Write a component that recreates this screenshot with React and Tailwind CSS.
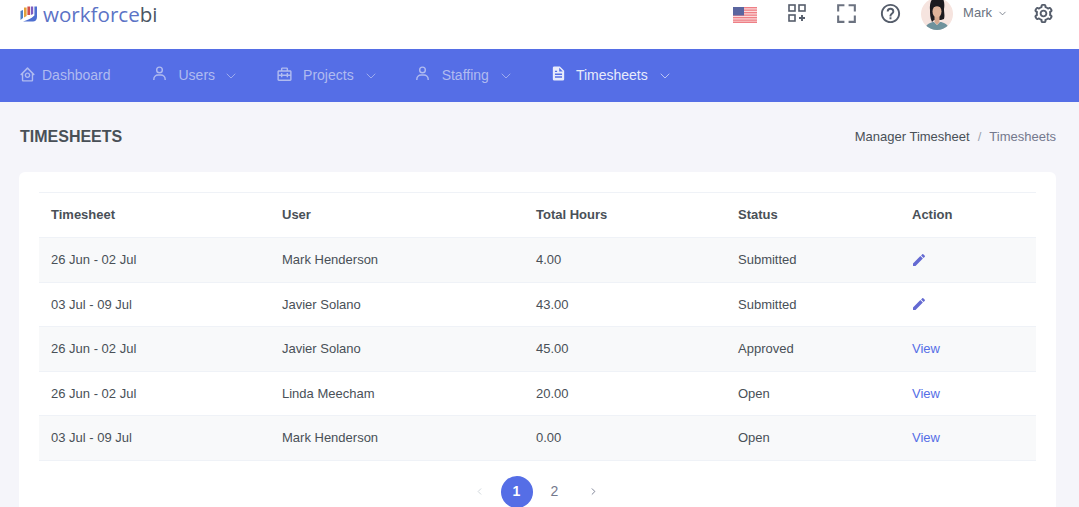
import React from "react";
import { ChevronDown, ChevronLeft, ChevronRight } from "lucide-react";
import { BiHomeCircle, BiUser, BiBriefcaseAlt2, BiSolidFile, BiFullscreen, BiHelpCircle, BiCog } from "react-icons/bi";

const rows = [
  ["26 Jun - 02 Jul", "Mark Henderson", "4.00", "Submitted", "edit"],
  ["03 Jul - 09 Jul", "Javier Solano", "43.00", "Submitted", "edit"],
  ["26 Jun - 02 Jul", "Javier Solano", "45.00", "Approved", "View"],
  ["26 Jun - 02 Jul", "Linda Meecham", "20.00", "Open", "View"],
  ["03 Jul - 09 Jul", "Mark Henderson", "0.00", "Open", "View"],
];

function Logo() {
  return (
    <svg width="18" height="18" viewBox="0 0 18 18">
      <path d="M0.5 6 L3 5 V13 L0.5 15 Z" fill="#4f7fc4" />
      <path d="M4 2.5 H6.6 V11 L4 12.5 Z" fill="#e3a13a" />
      <path d="M7.4 1.5 H10 V10 H7.4 Z" fill="#d4504a" />
      <path d="M10.8 1.5 H13.2 V9 L10.8 10 Z" fill="#7d5cc0" />
      <path d="M14.4 1.5 H17 V12 C17 15 15 16.5 13 16.5 H3 C7 15 11 14 14.4 10.5 Z" fill="#4e6fd0" />
    </svg>
  );
}

function Flag() {
  return (
    <svg width="24" height="16" viewBox="0 0 24 16">
      <rect width="24" height="16" fill="#fbdcdc" />
      {[0, 2.5, 5, 7.5, 10, 12.5].map((y) => (
        <rect key={y} y={y} width="24" height="1.3" fill="#ee7f86" />
      ))}
      <rect y="14.6" width="24" height="1.4" fill="#ee7f86" />
      <rect width="11" height="8.5" fill="#5a659f" />
    </svg>
  );
}

function AddGrid() {
  return (
    <svg width="18" height="18" viewBox="0 0 18 18" fill="none" stroke="#555d6b" strokeWidth="1.6">
      <rect x="1" y="1" width="6" height="6" />
      <rect x="11" y="1" width="6" height="6" />
      <rect x="1" y="11" width="6" height="6" />
      <path d="M14 11 V17 M11 14 H17" strokeWidth="1.9" />
    </svg>
  );
}

function Avatar() {
  return (
    <svg width="32" height="32" viewBox="0 0 32 32" className="rounded-full">
      <rect width="32" height="32" fill="#f6e4df" />
      <path d="M9 12 C8 2 13 -2 17 -2 C23 -2 24 5 23 11 C23 15 24 17 23 21 L20 22 H13 L11 24 C9 20 9 16 9 12 Z" fill="#1c1a1f" />
      <path d="M3 32 C5 26 10 24 13 24 L16 27 L19 24 C22 24 27 26 29 32 Z" fill="#6f929c" />
      <path d="M13.5 18 H18.5 V24 L16 27 L13.5 24 Z" fill="#d7a98f" />
      <ellipse cx="16" cy="13.5" rx="4.5" ry="6" fill="#dfb39a" />
      <path d="M11 11 C13 8 18 7 21 11 L21 6 H11 Z" fill="#1c1a1f" />
    </svg>
  );
}

function Pen() {
  return (
    <svg width="16" height="16" viewBox="0 0 24 24" fill="#646ad2" className="-ml-[1px]">
      <path d="M20.71,7.04C21.1,6.65 21.1,6 20.71,5.63L18.37,3.29C18,2.9 17.35,2.9 16.96,3.29L15.12,5.12L18.87,8.87M3,17.25V21H6.75L17.81,9.93L14.06,6.18L3,17.25Z" />
    </svg>
  );
}

function Chev({ className }) {
  return <ChevronDown size={16} strokeWidth={1.2} className={className} />;
}

export default function App() {
  return (
    <div className="h-[507px] w-[1079px] overflow-hidden bg-[#f5f5fa] font-['Liberation_Sans',sans-serif] text-[#495057]">
      <header className="flex h-[49px] items-start bg-white pl-[20px] pr-[24px]">
        <div className="mt-[4px] flex items-center">
          <Logo />
          <span className="ml-[5px] font-['Open_Sans',sans-serif] text-[20.6px] font-medium leading-[20px] text-[#5c73c6]">
            workforce<span className="font-normal text-[#4b5563]">bi</span>
          </span>
        </div>
        <div className="ml-auto flex h-[26px] items-center">
          <div className="mt-[4px]"><Flag /></div>
          <div className="ml-[31px]"><AddGrid /></div>
          <BiFullscreen size={25} className="ml-[28px] text-[#6b7280]" />
          <BiHelpCircle size={23} className="ml-[20px] text-[#555d6b]" />
          <div className="ml-[19px] mt-[1px]"><Avatar /></div>
          <span className="ml-[10px] text-[13px] text-[#6b7280]">Mark</span>
          <ChevronDown size={11} strokeWidth={1.8} className="ml-[5px] text-[#6b7280]" />
          <BiCog size={23} className="ml-[24px] text-[#555d6b]" />
        </div>
      </header>

      <nav className="flex h-[53px] items-center bg-[#556ee6] pl-[19px] text-[14px] text-[#b0bbf0]">
        <BiHomeCircle size={17} className="-mt-[3px]" />
        <span className="ml-[6px]">Dashboard</span>

        <BiUser size={17} className="ml-[40px] -mt-[4px]" />
        <span className="ml-[11px]">Users</span>
        <Chev className="ml-[8px]" />

        <BiBriefcaseAlt2 size={17} className="ml-[37px] -mt-[3px]" />
        <span className="ml-[10px]">Projects</span>
        <Chev className="ml-[9px]" />

        <BiUser size={17} className="ml-[35px] -mt-[4px]" />
        <span className="ml-[11px]">Staffing</span>
        <Chev className="ml-[9px]" />

        <BiSolidFile size={17} className="ml-[36px] -mt-[4px] text-[#e8ebfb]" />
        <span className="ml-[9px] text-[#e8ebfb]">Timesheets</span>
        <Chev className="ml-[9px] text-[#d5daf8]" />
      </nav>

      <div className="flex h-[70px] items-center justify-between pl-[20px] pr-[23px]">
        <h1 className="text-[16px] font-bold text-[#495057]">TIMESHEETS</h1>
        <div className="text-[13px]">
          <span className="text-[#495057]">Manager Timesheet</span>
          <span className="mx-[8px] text-[#9ca3af]">/</span>
          <span className="text-[#74788d]">Timesheets</span>
        </div>
      </div>

      <main className="ml-[19px] w-[1037px] rounded-[6px] bg-white px-[20px] pt-[20px]">
        <table className="w-[997px] table-fixed border-collapse text-[13px]">
          <colgroup>
            <col className="w-[231px]" />
            <col className="w-[254px]" />
            <col className="w-[202px]" />
            <col className="w-[174px]" />
            <col />
          </colgroup>
          <thead>
            <tr className="h-[45px] border-y border-[#eff2f7] text-left">
              {["Timesheet", "User", "Total Hours", "Status", "Action"].map((h) => (
                <th key={h} className="px-[12px] font-bold">{h}</th>
              ))}
            </tr>
          </thead>
          <tbody>
            {rows.map((r, i) => (
              <tr key={i} className={`h-[44.5px] border-b border-[#eff2f7] ${i % 2 === 0 ? "bg-[#f8f9fa]" : ""}`}>
                <td className="px-[12px]">{r[0]}</td>
                <td className="px-[12px]">{r[1]}</td>
                <td className="px-[12px]">{r[2]}</td>
                <td className="px-[12px]">{r[3]}</td>
                <td className="px-[12px]">
                  {r[4] === "edit" ? <Pen /> : <span className="text-[#556ee6]">{r[4]}</span>}
                </td>
              </tr>
            ))}
          </tbody>
        </table>

        <div className="mt-[9px] flex items-center justify-center pr-[3px] text-[14px]">
          <ChevronLeft size={11} className="text-[#ced4da]" />
          <span className="ml-[16px] flex size-[32px] items-center justify-center rounded-full bg-[#556ee6] font-bold text-white">1</span>
          <span className="flex size-[44px] items-center justify-center text-[#74788d]">2</span>
          <ChevronRight size={11} className="ml-[11px] text-[#74788d]" />
        </div>
      </main>
    </div>
  );
}
